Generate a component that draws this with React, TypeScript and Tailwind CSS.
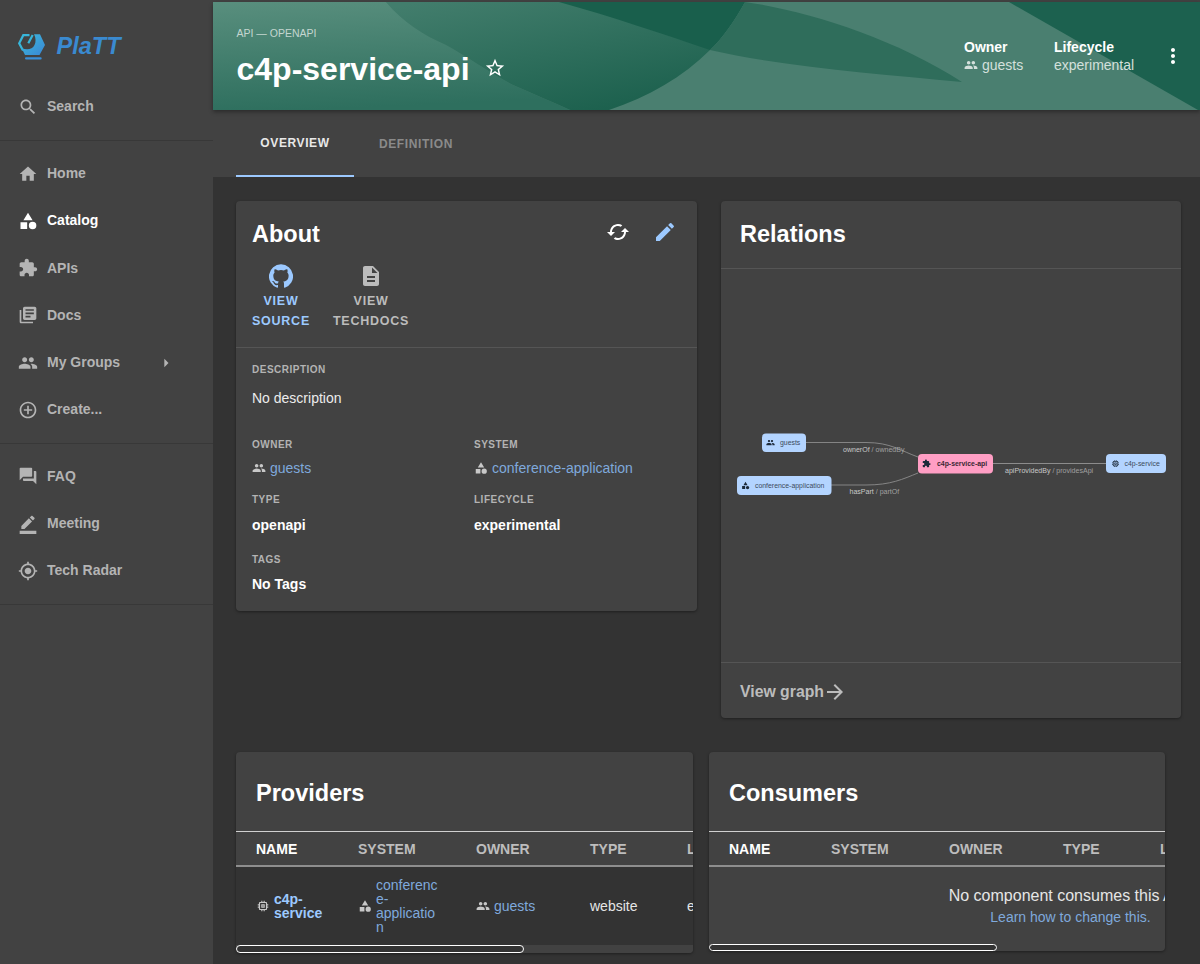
import React from "react";

const P = {
  search: "M15.5 14h-.79l-.28-.27C15.41 12.59 16 11.11 16 9.5 16 5.91 13.09 3 9.5 3S3 5.91 3 9.5 5.91 16 9.5 16c1.61 0 3.09-.59 4.23-1.57l.27.28v.79l5 4.99L20.49 19l-4.99-5zm-6 0C7.01 14 5 11.99 5 9.5S7.01 5 9.5 5 14 7.01 14 9.5 11.99 14 9.5 14z",
  home: "M10 20v-6h4v6h5v-8h3L12 3 2 12h3v8z",
  category: "M12 2l-5.5 9h11zM17.5 13a4.5 4.5 0 1 0 0 9 4.5 4.5 0 0 0 0-9zM3 13.5h8v8H3z",
  extension: "M20.5 11H19V7c0-1.1-.9-2-2-2h-4V3.5C13 2.12 11.88 1 10.5 1S8 2.12 8 3.5V5H4c-1.1 0-1.99.9-1.99 2v3.8H3.5c1.49 0 2.7 1.21 2.7 2.7s-1.21 2.7-2.7 2.7H2V20c0 1.1.9 2 2 2h3.8v-1.5c0-1.49 1.21-2.7 2.7-2.7 1.49 0 2.7 1.21 2.7 2.7V22H17c1.1 0 2-.9 2-2v-4h1.5c1.38 0 2.5-1.12 2.5-2.5S21.88 11 20.5 11z",
  docs: "M4 6H2v14c0 1.1.9 2 2 2h14v-2H4V6zm16-4H8c-1.1 0-2 .9-2 2v12c0 1.1.9 2 2 2h12c1.1 0 2-.9 2-2V4c0-1.1-.9-2-2-2zm-1 9H9V9h10v2zm-4 4H9v-2h6v2zm4-8H9V5h10v2z",
  people: "M16 11c1.66 0 2.99-1.34 2.99-3S17.66 5 16 5c-1.66 0-3 1.34-3 3s1.34 3 3 3zm-8 0c1.66 0 2.99-1.34 2.99-3S9.66 5 8 5C6.34 5 5 6.34 5 8s1.34 3 3 3zm0 2c-2.33 0-7 1.17-7 3.5V19h14v-2.5c0-2.33-4.67-3.5-7-3.5zm8 0c-.29 0-.62.02-.97.05 1.16.84 1.97 1.97 1.97 3.45V19h6v-2.5c0-2.33-4.67-3.5-7-3.5z",
  add: "M13 7h-2v4H7v2h4v4h2v-4h4v-2h-4V7zm-1-5C6.48 2 2 6.48 2 12s4.48 10 10 10 10-4.48 10-10S17.52 2 12 2zm0 18c-4.41 0-8-3.59-8-8s3.59-8 8-8 8 3.59 8 8-3.59 8-8 8z",
  forum: "M21 6h-2v9H6v2c0 .55.45 1 1 1h11l4 4V7c0-.55-.45-1-1-1zm-4 6V3c0-.55-.45-1-1-1H3c-.55 0-1 .45-1 1v14l4-4h10c.55 0 1-.45 1-1z",
  meeting: "M22 24H2v-4h20v4zM13.06 5.19l3.75 3.75L7.75 18H4v-3.75l9.06-9.06zm4.82 2.68-3.75-3.75 1.83-1.83c.39-.39 1.02-.39 1.41 0l2.34 2.34c.39.39.39 1.02 0 1.41l-1.83 1.83z",
  gps: "M12 8c-2.21 0-4 1.79-4 4s1.79 4 4 4 4-1.79 4-4-1.79-4-4-4zm8.94 3c-.46-4.17-3.77-7.48-7.94-7.94V1h-2v2.06C6.83 3.52 3.52 6.83 3.06 11H1v2h2.06c.46 4.17 3.77 7.48 7.94 7.94V23h2v-2.06c4.17-.46 7.48-3.77 7.94-7.94H23v-2h-2.06zM12 19c-3.87 0-7-3.13-7-7s3.13-7 7-7 7 3.13 7 7-3.13 7-7 7z",
  arrowRight: "M10 17l5-5-5-5v10z",
  star: "M22 9.24l-7.19-.62L12 2 9.19 8.63 2 9.24l5.46 4.73L5.82 21 12 17.27 18.18 21l-1.63-7.03L22 9.24zM12 15.4l-3.76 2.27 1-4.28-3.32-2.88 4.38-.38L12 6.1l1.71 4.04 4.38.38-3.32 2.88 1 4.28L12 15.4z",
  more: "M12 8c1.1 0 2-.9 2-2s-.9-2-2-2-2 .9-2 2 .9 2 2 2zm0 2c-1.1 0-2 .9-2 2s.9 2 2 2 2-.9 2-2-.9-2-2-2zm0 6c-1.1 0-2 .9-2 2s.9 2 2 2 2-.9 2-2-.9-2-2-2z",
  cached: "M19 8l-4 4h3c0 3.31-2.69 6-6 6-1.01 0-1.97-.25-2.8-.7l-1.46 1.46C8.97 19.54 10.43 20 12 20c4.42 0 8-3.58 8-8h3l-4-4zM6 12c0-3.31 2.69-6 6-6 1.01 0 1.97.25 2.8.7l1.46-1.46C15.03 4.46 13.57 4 12 4c-4.42 0-8 3.58-8 8H1l4 4 4-4H6z",
  edit: "M3 17.25V21h3.75L17.81 9.94l-3.75-3.75L3 17.25zM20.71 7.04c.39-.39.39-1.02 0-1.41l-2.34-2.34a.9959.9959 0 0 0-1.41 0l-1.83 1.83 3.75 3.75 1.83-1.83z",
  github: "M12 .3a12 12 0 0 0-3.8 23.4c.6.1.8-.3.8-.6v-2c-3.3.7-4-1.6-4-1.6-.6-1.4-1.4-1.8-1.4-1.8-1-.7.1-.7.1-.7 1.2 0 1.9 1.2 1.9 1.2 1 1.8 2.8 1.3 3.5 1 0-.8.4-1.3.7-1.6-2.7-.3-5.5-1.3-5.5-6 0-1.2.5-2.3 1.3-3.1-.2-.4-.6-1.6 0-3.2 0 0 1-.3 3.4 1.2a11.5 11.5 0 0 1 6 0c2.3-1.5 3.3-1.2 3.3-1.2.6 1.6.2 2.8 0 3.2.9.8 1.3 1.9 1.3 3.2 0 4.6-2.8 5.6-5.5 5.9.5.4.9 1 .9 2.2v3.3c0 .3.1.7.8.6A12 12 0 0 0 12 .3",
  description: "M14 2H6c-1.1 0-1.99.9-1.99 2L4 20c0 1.1.89 2 1.99 2H18c1.1 0 2-.9 2-2V8l-6-6zm2 16H8v-2h8v2zm0-4H8v-2h8v2zm-3-5V3.5L18.5 9H13z",
  memory: "M15 9H9v6h6V9zm-2 4h-2v-2h2v2zm8-2V9h-2V7c0-1.1-.9-2-2-2h-2V3h-2v2h-2V3H9v2H7c-1.1 0-2 .9-2 2v2H3v2h2v2H3v2h2v2c0 1.1.9 2 2 2h2v2h2v-2h2v2h2v-2h2c1.1 0 2-.9 2-2v-2h2v-2h-2v-2h2zm-4 6H7V7h10v10z",
  arrowForward: "M12 4l-1.41 1.41L16.17 11H4v2h12.17l-5.58 5.59L12 20l8-8z",
};

function Ic({ d, className }: { d: string; className: string }) {
  return (
    <svg viewBox="0 0 24 24" className={"shrink-0 fill-current " + className}>
      <path d={d} />
    </svg>
  );
}

function Logo() {
  return (
    <svg viewBox="0 0 28 28" className="h-[28px] w-[28px] shrink-0">
      <defs>
        <linearGradient id="lg" x1="0" y1="0" x2="1" y2="1">
          <stop offset="0" stopColor="#3bbcdc" />
          <stop offset="1" stopColor="#3a86d4" />
        </linearGradient>
      </defs>
      <path d="M11.5 3.2 H5.3 L1.2 11.3 L5 18.5" fill="none" stroke="#38b6da" strokeWidth="2.2" />
      <path d="M16 2.2 H22 L27 13 L21.5 23 H7 L3.7 16.3 C9 18 14.5 17.5 16.5 13 C18 10 18 6 16 2.2 Z" fill="url(#lg)" />
      <path d="M14.7 3 L10.3 11.3" fill="none" stroke="#38b6da" strokeWidth="2.2" />
      <rect x="7" y="25.3" width="16.7" height="2.2" rx="1.1" fill="#3a8fd8" />
    </svg>
  );
}

function NavItem({ d, label, active, caret }: { d: string; label: string; active?: boolean; caret?: boolean }) {
  return (
    <div className={"flex h-[47.2px] items-center pl-[17.5px] text-[14px] font-bold " + (active ? "text-white" : "text-[#b4b4b4]")}>
      <Ic d={d} className="h-5 w-5" />
      <span className="ml-[9.5px]">{label}</span>
      {caret && <Ic d={P.arrowRight} className="ml-auto mr-[37px] h-5 w-5" />}
    </div>
  );
}

function Sidebar() {
  return (
    <aside className="flex w-[213px] shrink-0 flex-col bg-[#424242]">
      <div className="flex h-[83px] items-start pl-[18px] pt-[32px]">
        <Logo />
        <span className="ml-[10.5px] mt-[-1px] text-[23.5px] font-bold italic leading-[30px] text-[#3a8ad0]">PlaTT</span>
      </div>
      <NavItem d={P.search} label="Search" />
      <div className="mt-[9.5px] h-px bg-[#383838]" />
      <div className="mt-[9.5px]">
        <NavItem d={P.home} label="Home" />
        <NavItem d={P.category} label="Catalog" active />
        <NavItem d={P.extension} label="APIs" />
        <NavItem d={P.docs} label="Docs" />
        <NavItem d={P.people} label="My Groups" caret />
        <NavItem d={P.add} label="Create..." />
      </div>
      <div className="mt-[10px] h-px bg-[#383838]" />
      <div className="mt-[8.5px]">
        <NavItem d={P.forum} label="FAQ" />
        <NavItem d={P.meeting} label="Meeting" />
        <NavItem d={P.gps} label="Tech Radar" />
      </div>
      <div className="mt-[10px] h-px bg-[#383838]" />
    </aside>
  );
}

function HeaderArt() {
  return (
    <svg viewBox="0 0 987 108" preserveAspectRatio="none" className="absolute inset-0 h-full w-full">
      <defs>
        <linearGradient id="a" x1="0.1" y1="0" x2="0.25" y2="1">
          <stop offset="0" stopColor="#588e7d" />
          <stop offset="1" stopColor="#2e6f5e" />
        </linearGradient>
        <linearGradient id="b" x1="0.1" y1="0" x2="0.75" y2="1">
          <stop offset="0" stopColor="#427d6c" />
          <stop offset="1" stopColor="#1a5f4c" />
        </linearGradient>
      </defs>
      <rect width="987" height="108" fill="#4a7f70" />
      <path d="M0 0H173C190 20 210 33 233 43C255 55 280 73 300 83C320 92 340 100 357 108H0Z" fill="url(#a)" />
      <path d="M173 0H532L497 48C470 75 435 95 396 108H357C340 100 320 92 300 83C280 73 255 55 233 43C210 33 190 20 173 0Z" fill="url(#b)" />
      <path d="M346 0H532C522 18 510 36 497 48C450 32 400 15 346 0Z" fill="#195f4c" />
      <path d="M532 0C590 8 680 35 749 80C665 72 570 65 497 48C510 36 522 18 532 0Z" fill="#2f6d5b" />
      <path d="M796 0H987V108H985Z" fill="#1c614f" />
    </svg>
  );
}

function Header() {
  return (
    <div className="relative h-[108px] shrink-0 overflow-hidden shadow-[0_2px_4px_rgba(0,0,0,0.35)]">
      <HeaderArt />
      <div className="relative flex h-full items-start pl-[23.5px]">
        <div>
          <div className="mt-[25px] text-[10.5px] leading-[12px] text-[#c4d6d0]">API — OPENAPI</div>
          <div className="mt-[12px] flex items-center text-white">
            <span className="text-[32px] font-bold leading-[36px]">c4p-service-api</span>
            <Ic d={P.star} className="ml-[14px] mt-[-3px] h-[22px] w-[22px]" />
          </div>
        </div>
        <div className="ml-auto mr-[27px] mt-[36px] flex text-[14px] leading-[18px]">
          <div className="w-[90px]">
            <div className="font-bold text-white">Owner</div>
            <div className="flex items-center text-[#d4e0dc]">
              <Ic d={P.people} className="mr-[4px] h-[14px] w-[14px]" />
              guests
            </div>
          </div>
          <div className="w-[80px]">
            <div className="font-bold text-white">Lifecycle</div>
            <div className="text-[#d4e0dc]">experimental</div>
          </div>
        </div>
        <Ic d={P.more} className="mr-[15px] mt-[42px] h-6 w-6 text-white" />
      </div>
    </div>
  );
}

function Tabs() {
  return (
    <div className="flex h-[67px] shrink-0 bg-[#424242] pl-[23px] text-[12px] font-bold tracking-[0.6px]">
      <div className="flex h-full w-[118px] items-center justify-center border-b-2 border-[#9cc9ff] text-[#e8e8e8]">OVERVIEW</div>
      <div className="flex h-full w-[124px] items-center justify-center text-[#8a8a8a]">DEFINITION</div>
    </div>
  );
}

function Label({ children, className = "" }: { children: React.ReactNode; className?: string }) {
  return <div className={"flex h-[14px] items-center text-[10px] font-bold tracking-[0.5px] text-[#b3b3b3] " + className}>{children}</div>;
}

function Val({ children, className = "" }: { children: React.ReactNode; className?: string }) {
  return <div className={"flex h-[20px] items-center text-[14px] " + className}>{children}</div>;
}

function About() {
  return (
    <section className="w-[461px] self-start rounded-[4px] bg-[#424242] shadow-[0_1px_3px_rgba(0,0,0,0.4)]">
      <div className="px-[16px]">
        <div className="flex h-[63px] items-start pt-[17px]">
          <h2 className="mt-[1px] text-[23.5px] font-bold leading-[30px] text-white">About</h2>
          <Ic d={P.cached} className="ml-auto mt-[2px] h-6 w-6 text-white" />
          <Ic d={P.edit} className="ml-[23px] mr-[4px] mt-[2px] h-6 w-6 text-[#9cc9ff]" />
        </div>
        <div className="flex h-[83px] text-[12.5px] font-bold leading-[20px] tracking-[0.75px]">
          <div className="flex flex-col items-center text-[#9cc9ff]">
            <Ic d={P.github} className="h-6 w-6" />
            <div className="mt-[3px] text-center">
              VIEW
              <br />
              SOURCE
            </div>
          </div>
          <div className="ml-[23px] flex flex-col items-center text-[#bcbcbc]">
            <Ic d={P.description} className="h-6 w-6" />
            <div className="mt-[3px] text-center">
              VIEW
              <br />
              TECHDOCS
            </div>
          </div>
        </div>
      </div>
      <div className="h-px bg-[#555555]" />
      <div className="px-[16px] pb-[17px] pt-[14px] text-white">
        <Label>DESCRIPTION</Label>
        <Val className="mt-[12px] text-[#ececec]">No description</Val>
        <div className="mt-[29px] grid grid-cols-[222px_1fr]">
          <div>
            <Label>OWNER</Label>
            <Val className="mt-[7px] text-[#7fa9dc]">
              <Ic d={P.people} className="mr-[4px] h-[14px] w-[14px] text-[#c8c8c8]" />
              guests
            </Val>
          </div>
          <div>
            <Label>SYSTEM</Label>
            <Val className="mt-[7px] text-[#7fa9dc]">
              <Ic d={P.category} className="mr-[4px] h-[14px] w-[14px] text-[#c8c8c8]" />
              conference-application
            </Val>
          </div>
          <div className="mt-[14px]">
            <Label>TYPE</Label>
            <Val className="mt-[9px] font-bold">openapi</Val>
          </div>
          <div className="mt-[14px]">
            <Label>LIFECYCLE</Label>
            <Val className="mt-[9px] font-bold">experimental</Val>
          </div>
        </div>
        <Label className="mt-[17px]">TAGS</Label>
        <Val className="mt-[8px] font-bold">No Tags</Val>
      </div>
    </section>
  );
}

function GraphIcon({ d, x, y }: { d: string; x: number; y: number }) {
  return (
    <svg x={x} y={y} width="9" height="9" viewBox="0 0 24 24" fill="#1c2a3a">
      <path d={d} />
    </svg>
  );
}

function Graph() {
  const sys = '"Liberation Sans", Arial, sans-serif';
  return (
    <svg viewBox="0 0 460 393" className="h-[393px] w-[460px]" fontFamily={sys}>
      <g fill="none" stroke="#8c8c8c" strokeWidth="0.9">
        <path d="M85 173.5 H145 C170 173.5 180 182 197 188" />
        <path d="M110 216 H145 C170 216 182 210 197 204" />
        <path d="M272 194.5 H385" strokeWidth="1.2" />
      </g>
      <g fontSize="7.05">
        <text x="122" y="182.5" fill="#c8c8c8">ownerOf <tspan fill="#a0a0a0">/ ownedBy</tspan></text>
        <text x="128.5" y="224.5" fill="#c8c8c8">hasPart <tspan fill="#a0a0a0">/ partOf</tspan></text>
        <text x="284" y="203.5" fill="#c8c8c8">apiProvidedBy <tspan fill="#a0a0a0">/ providesApi</tspan></text>
      </g>
      <rect x="41" y="164.5" width="44" height="18.5" rx="4" fill="#b3d4ff" />
      <GraphIcon d={P.people} x={45} y={169} />
      <text x="59" y="175.5" fontSize="6.9" fill="#3c4a5c">guests</text>
      <rect x="16" y="207" width="94.5" height="19" rx="4" fill="#b3d4ff" />
      <GraphIcon d={P.category} x={20} y={212} />
      <text x="34" y="218.5" fontSize="6.9" fill="#3c4a5c">conference-application</text>
      <rect x="197" y="185" width="75" height="19.5" rx="4" fill="#ff9ec4" />
      <GraphIcon d={P.extension} x={201} y={190} />
      <text x="216" y="197" fontSize="6.9" fontWeight="700" fill="#3a2733">c4p-service-api</text>
      <rect x="385" y="185" width="60" height="19" rx="4" fill="#b3d4ff" />
      <GraphIcon d={P.memory} x={390} y={190} />
      <text x="403.5" y="196.8" fontSize="6.9" fill="#3c4a5c">c4p-service</text>
    </svg>
  );
}

function Relations() {
  return (
    <section className="flex h-[517px] w-[460px] flex-col rounded-[4px] bg-[#424242] shadow-[0_1px_3px_rgba(0,0,0,0.4)]">
      <div className="flex h-[67px] items-start px-[19px] pt-[17px]">
        <h2 className="mt-[1px] text-[23.5px] font-bold leading-[30px] text-white">Relations</h2>
      </div>
      <div className="h-px bg-[#555555]" />
      <Graph />
      <div className="h-px bg-[#555555]" />
      <div className="flex flex-1 items-center pl-[19px] pt-[2px] text-[15.8px] font-bold text-[#bcbcbc]">
        View graph
        <Ic d={P.arrowForward} className="ml-[-1px] h-6 w-6" />
      </div>
    </section>
  );
}

function TableHead() {
  return (
    <div className="flex h-[36px] items-center border-y border-t-[#d0d0d0] border-b-[#8e8e8e] border-b-2 pl-[20px] pt-[1px] text-[14px] font-bold text-[#bdbdbd]">
      <div className="w-[102px] text-white">NAME</div>
      <div className="w-[118px]">SYSTEM</div>
      <div className="w-[114px]">OWNER</div>
      <div className="w-[97px]">TYPE</div>
      <div>LIFECYCLE</div>
    </div>
  );
}

function Providers() {
  return (
    <section className="h-[201px] w-[457px] overflow-hidden rounded-[4px] bg-[#424242] shadow-[0_1px_3px_rgba(0,0,0,0.4)]">
      <div className="h-[79px] pl-[20px] pt-[26px]">
        <h2 className="text-[23.5px] font-bold leading-[30px] text-white">Providers</h2>
      </div>
      <div className="w-[723px]">
        <TableHead />
        <div className="flex h-[78px] items-center bg-[#333333] pl-[20px] text-[14px] text-[#e6e6e6]">
          <div className="flex w-[102px] items-center font-bold text-[#9cc9ff]">
            <Ic d={P.memory} className="mr-[4px] h-[14px] w-[14px] text-[#c8c8c8]" />
            <span className="w-[62px] leading-[14px]">c4p-service</span>
          </div>
          <div className="flex w-[118px] items-center text-[#7fa9dc]">
            <Ic d={P.category} className="mr-[4px] h-[14px] w-[14px] text-[#c8c8c8]" />
            <span className="w-[64px] break-words leading-[14px]">conference-application</span>
          </div>
          <div className="flex w-[114px] items-center text-[#7fa9dc]">
            <Ic d={P.people} className="mr-[4px] h-[14px] w-[14px] text-[#c8c8c8]" />
            guests
          </div>
          <div className="w-[97px]">website</div>
          <div>experimental</div>
        </div>
      </div>
      <div className="relative h-[8px] bg-[#424242]">
        <div className="h-[8px] w-[288px] rounded-full border-[1.5px] border-white bg-[#333333]" />
      </div>
    </section>
  );
}

function Consumers() {
  return (
    <section className="h-[199px] w-[456px] overflow-hidden rounded-[4px] bg-[#424242] shadow-[0_1px_3px_rgba(0,0,0,0.4)]">
      <div className="h-[79px] pl-[20px] pt-[26px]">
        <h2 className="text-[23.5px] font-bold leading-[30px] text-white">Consumers</h2>
      </div>
      <div className="w-[723px]">
        <TableHead />
        <div className="flex h-[77px] flex-col items-center pt-[19px] text-center">
          <div className="pl-[1px] text-[16px] leading-[20px] text-[#e6e6e6]">No component consumes this API.</div>
          <div className="mt-[2px] text-[14px] leading-[18px] text-[#7fa9dc]">Learn how to change this.</div>
        </div>
      </div>
      <div className="h-[7px] w-[288px] rounded-full border-[1.5px] border-white bg-[#333333]" />
    </section>
  );
}

export default function App() {
  return (
    <div className="flex h-[964px] w-[1200px] overflow-hidden bg-[#333333] font-['Liberation_Sans',Arial,sans-serif]">
      <Sidebar />
      <main className="flex min-w-0 flex-1 flex-col bg-[#333333]">
        <div className="h-[2px] shrink-0 bg-[#424242]" />
        <Header />
        <Tabs />
        <div className="pl-[23px] pt-[24px]">
          <div className="flex gap-[24px]">
            <About />
            <Relations />
          </div>
          <div className="mt-[34px] flex gap-[16px]">
            <Providers />
            <Consumers />
          </div>
        </div>
      </main>
    </div>
  );
}
